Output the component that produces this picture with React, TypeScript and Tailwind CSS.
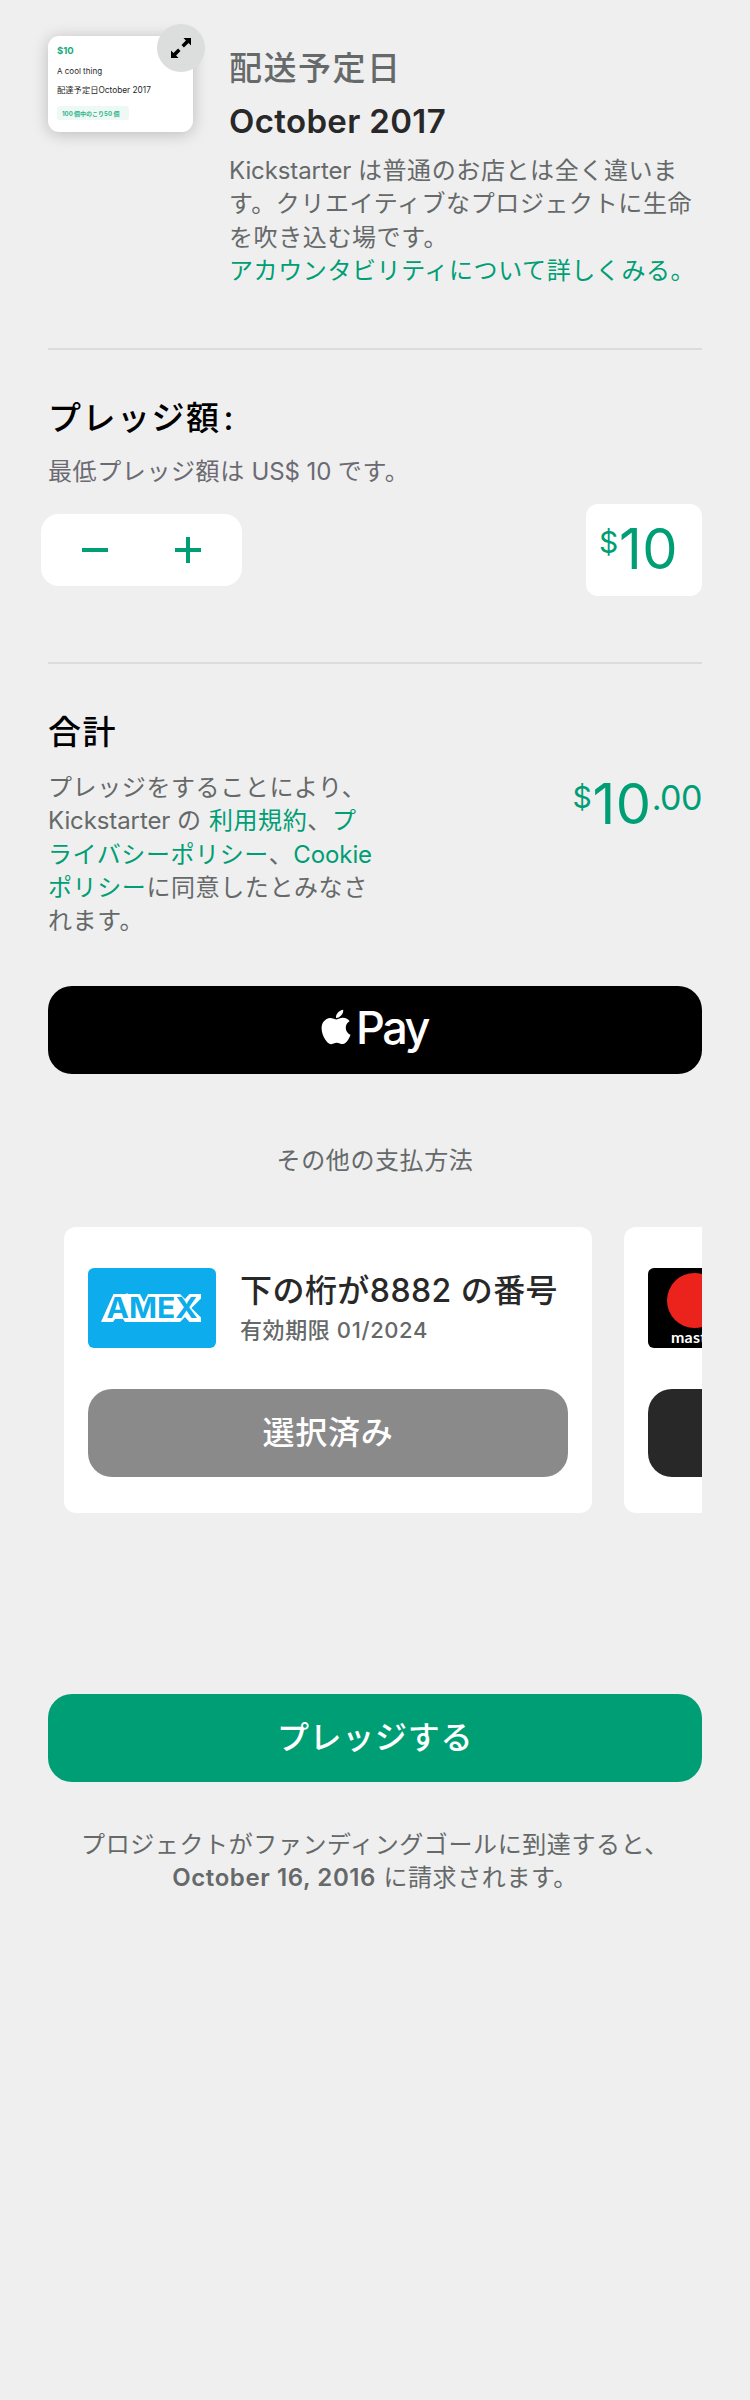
import React from "react";

const body = "text-[24px] leading-[33.3px] tracking-[0.6px] text-[#656969]";

function Latin({ children }: { children: React.ReactNode }) {
  return <span className="tracking-[-0.1px]">{children}</span>;
}

function Amex() {
  return (
    <svg viewBox="0 0 128 80" className="h-20 w-32 shrink-0 rounded-md">
      <rect width="128" height="80" fill="#0dacec" />
      <path
        d="M13 54 L25.500 26 H38 L39 25 L40 26 H52 L56 34 L60 26 H92 L97 31 L101.500 26 H113 V30.500 L103.500 40 L113 49.500 V54 H101.500 L97 49 L92 54 H37 L35 51 H27 L25 54 Z"
        fill="#fff"
      />
      <text
        x="18.500"
        y="50.200"
        textLength="91"
        lengthAdjust="spacingAndGlyphs"
        fontSize="28.500"
        fontWeight="700"
        fontFamily="Inter, sans-serif"
        fill="#0dacec"
      >
        AMEX
      </text>
    </svg>
  );
}

function Mastercard() {
  return (
    <svg viewBox="0 0 128 80" className="h-20 w-32 shrink-0 rounded-md">
      <rect width="128" height="80" fill="#000" />
      <circle cx="46.500" cy="32.500" r="27.500" fill="#eb231c" />
      <circle cx="81.500" cy="32.500" r="27.500" fill="#f79e1b" />
      <path d="M64 11.300a27.500 27.500 0 0 1 0 42.400a27.500 27.500 0 0 1 0-42.400Z" fill="#ff5f00" />
      <text x="23" y="74.500" fontSize="16" fontWeight="700" fill="#fff" fontFamily="Lato, sans-serif" letterSpacing="0.200">mastercard</text>
    </svg>
  );
}

function RewardThumb() {
  return (
    <div className="relative mt-9 h-24 w-[145px] shrink-0 rounded-[11px] bg-white pl-[9px] pt-2 text-[#282828] shadow-[0_2px_16px_rgba(0,0,0,0.22)]">
      <div className="text-[9.500px] leading-[14px] font-bold text-[#1cab80]">$10</div>
      <div className="mt-[6px] text-[8px] leading-[14px]">A cool thing</div>
      <div className="mt-[5px] text-[8.300px] leading-[14px] whitespace-nowrap">配達予定日October 2017</div>
      <div className="mt-[9px] flex h-[14px] w-[72px] items-center rounded-[3px] bg-[#eef8f5] pl-[5px] text-[6px] font-bold whitespace-nowrap text-[#2fb58c]">
        100 個中のこり50 個
      </div>
      <div className="absolute -top-3 left-[109px] flex size-12 items-center justify-center rounded-full bg-[#dcdedd]">
        <svg viewBox="0 0 20 20" className="size-5">
          <path d="M12.500 0H20V7.500L17.600 5.100L12.900 9.500L10.500 7.100L14.900 2.400ZM7.500 20H0V12.500L2.400 14.900L7.100 10.500L9.500 12.900L5.100 17.600Z" fill="#000" />
        </svg>
      </div>
    </div>
  );
}

export default function App() {
  return (
    <main className="h-[2400px] w-[750px] overflow-hidden bg-[#efefef] px-12 font-['Inter','Noto_Sans_CJK_JP',sans-serif]" lang="ja">
      <section className="flex h-[348px] gap-9">
        <RewardThumb />
        <div className="w-[474px] pt-12">
          <h2 className="text-[33px] leading-10 font-medium tracking-[1.500px] text-[#656969]">配送予定日</h2>
          <p className="mt-[13px] text-[33px] leading-10 font-semibold tracking-[0.350px] text-[#282828]">October 2017</p>
          <p className={`mt-[13px] whitespace-nowrap ${body}`}>
            <Latin>Kickstarter </Latin>は普通のお店とは全く違いま<br />す。クリエイティブなプロジェクトに生命<br />を吹き込む場です。<br />
            <a className="text-[#009e74]">アカウンタビリティについて詳しくみる。</a>
          </p>
        </div>
      </section>

      <section className="h-[314px] border-t-2 border-[#dcdcdc]">
        <h2 className="mt-[48px] text-[33px] leading-10 font-medium tracking-[1.500px] text-black">プレッジ額<span className="ml-[3px]">:</span></h2>
        <p className="mt-[17px] text-[24px] leading-[33px] tracking-[0.600px] text-[#6b6a72]">最低プレッジ額は<Latin> US$ 10 </Latin>です。</p>
        <div className="mt-[16px] flex items-center justify-between">
          <div className="-ml-[7px] flex h-18 w-[201px] items-center rounded-[18px] bg-white pl-[41px]">
            <svg viewBox="0 0 120 26" className="h-[26px] w-[120px]">
              <path d="M0 13H26M93 13H119M106 0V26" stroke="#009e74" strokeWidth="4" />
            </svg>
          </div>
          <div className="flex h-[92px] w-[116px] items-start rounded-xl bg-white pl-[13px] pt-[25px] text-[#009e74]">
            <span className="w-5 text-[30px] leading-[26px]">$</span>
            <span className="text-[56px] leading-10 tracking-[0.500px]">10</span>
          </div>
        </div>
      </section>

      <section className="h-[324px] border-t-2 border-[#dcdcdc]">
        <h2 className="mt-[48px] text-[33px] leading-10 font-medium tracking-[1.500px] text-black">合計</h2>
        <div className="mt-[19px] flex justify-between">
          <p className={`whitespace-nowrap ${body}`}>
            プレッジをすることにより、<br /><Latin>Kickstarter </Latin>の <a className="text-[#009e74]">利用規約</a>、<a className="text-[#009e74]">プ<br />ライバシーポリシー</a>、<a className="text-[#009e74]"><Latin>Cookie</Latin><br />ポリシー</a>に同意したとみなさ<br />れます。
          </p>
          <div className="flex items-start pt-[13px] text-[#009e74]">
            <span className="w-5 text-[30px] leading-[26px]">$</span>
            <span className="text-[56px] leading-10 tracking-[0.500px]">10</span>
            <span className="text-[34px] leading-7 tracking-[-0.500px]">.00</span>
          </div>
        </div>
      </section>

      <button className="flex h-22 w-full items-center justify-center rounded-[24px] bg-black pr-1 text-white">
        <svg viewBox="0 0 170 170" className="mb-1.5 h-9 w-9" fill="#fff">
          <path d="M150.400 130.300c-2.500 5.700-5.400 10.900-8.700 15.700-4.600 6.500-8.300 11-11.200 13.500-4.500 4.100-9.300 6.200-14.400 6.300-3.700 0-8.100-1-13.300-3.200-5.200-2.100-9.900-3.200-14.300-3.200-4.600 0-9.400 1.100-14.600 3.200-5.200 2.200-9.400 3.300-12.700 3.400-4.900.2-9.800-1.900-14.700-6.400-3.100-2.700-7.100-7.400-11.800-14-5.100-7.100-9.200-15.400-12.500-24.800-3.500-10.200-5.200-20.100-5.200-29.600 0-10.900 2.400-20.400 7.100-28.300 3.700-6.300 8.600-11.300 14.800-15 6.200-3.700 12.800-5.500 20-5.700 3.900 0 9.100 1.200 15.500 3.600 6.400 2.400 10.500 3.600 12.300 3.600 1.300 0 5.900-1.400 13.500-4.200 7.300-2.600 13.400-3.700 18.400-3.300 13.600 1.100 23.800 6.500 30.600 16.100-12.200 7.400-18.200 17.700-18.100 31 .1 10.300 3.900 18.900 11.200 25.700 3.300 3.200 7.100 5.600 11.200 7.300-.9 2.600-1.800 5.100-2.900 7.500zM119.100 7.200c0 8.100-3 15.700-8.900 22.700-7.100 8.300-15.700 13.100-25.100 12.400-.1-1-.2-2-.2-3.100 0-7.800 3.400-16.100 9.400-22.900 3-3.500 6.800-6.300 11.400-8.600 4.600-2.200 9-3.500 13.100-3.700.1 1.100.2 2.200.2 3.200z" />
        </svg>
        <span className="mb-[5px] ml-[2px] text-[45px] leading-none font-medium tracking-[-2.500px]">Pay</span>
      </button>

      <p className="mt-[70px] text-center text-[24px] leading-[34px] tracking-[0.600px] text-[#656969]">その他の支払方法</p>

      <section className="mt-[49px] flex h-[286px] gap-8 overflow-hidden pl-4">
        <article className="w-[528px] shrink-0 rounded-xl bg-white px-6 pt-[41px]">
          <div className="flex gap-6">
            <Amex />
            <div className="whitespace-nowrap">
              <h3 className="mt-[3px] text-[32px] leading-10 font-medium tracking-[0.450px] text-[#282828]">下の桁が8882 の番号</h3>
              <p className="mt-[4px] text-[22px] leading-[30px] font-medium tracking-[0.600px] text-[#656969]">有効期限 01/2024</p>
            </div>
          </div>
          <button className="mt-[41px] h-22 w-full rounded-[24px] bg-[#8a8a8a] text-[32px] font-medium tracking-[0.700px] text-white">選択済み</button>
        </article>
        <article className="w-[528px] shrink-0 rounded-xl bg-white px-6 pt-[41px]">
          <Mastercard />
          <button className="mt-[41px] block h-22 w-full rounded-[24px] bg-[#282828]" />
        </article>
      </section>

      <button className="mt-[181px] h-22 w-full rounded-[24px] bg-[#009e74] text-[32px] font-medium tracking-[0.700px] text-white">プレッジする</button>
      <p className={`mt-[46px] text-center whitespace-nowrap ${body}`}>
        プロジェクトがファンディングゴールに到達すると、<br /><b className="font-semibold">October 16, 2016</b> に請求されます。
      </p>
    </main>
  );
}
